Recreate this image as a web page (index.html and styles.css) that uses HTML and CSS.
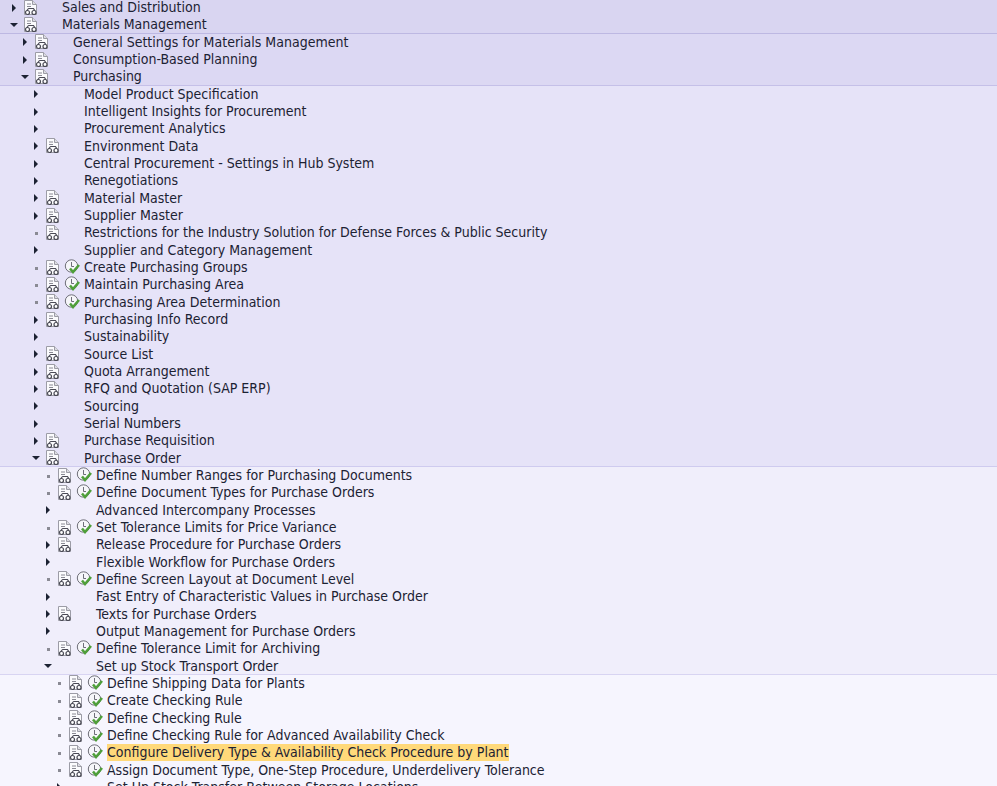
FILE: index.html
```html
<!DOCTYPE html>
<html lang="en">
<head>
    <meta charset="UTF-8">
    <meta name="viewport" content="width=device-width, initial-scale=1.0">
    <title>Customizing tree</title>
    <link rel="stylesheet" href="styles.css">
</head>
<body>

    <svg class="defs" width="0" height="0">
        <symbol id="doc" viewBox="0 0 15 16">
            <path d="M1.5 .5H9.5L13.5 4.5V14.5H1.5Z" fill="#fbfbfd" stroke="#9c9ca6"/>
            <path d="M9.5 .5V4.5H13.5" fill="#dcdce2" stroke="#9c9ca6"/>
            <path d="M4 4H8M4 6.5H8" stroke="#8a8a94"/>
            <path d="M5.5 8.5H10.5L12 11M5.5 8.5L3.5 11" fill="none" stroke="#4a4a55" stroke-width="1.2"/>
            <circle cx="4.5" cy="12.5" r="2" fill="#fff" stroke="#4a4a55" stroke-width="1.2"/>
            <circle cx="11" cy="12.5" r="2" fill="#fff" stroke="#4a4a55" stroke-width="1.2"/>
        </symbol>
        <symbol id="check" viewBox="0 0 17 16">
            <circle cx="7.5" cy="7" r="6.2" fill="#f6f6fa" stroke="#6e6e78"/>
            <path d="M7.5 3V7.5H10" fill="none" stroke="#6e6e78"/>
            <path d="M6 9.5L9 13L15 6" fill="none" stroke="#4f9f3a" stroke-width="2.6"/>
        </symbol>
    </svg>

    <div class="tree">
        <div class="level-0">
            <div class="row"><span class="toggle closed"></span><svg class="doc"><use href="#doc"/></svg><span class="gap"></span><span class="label">Sales and Distribution</span></div>
            <div class="row"><span class="toggle open"></span><svg class="doc"><use href="#doc"/></svg><span class="gap"></span><span class="label">Materials Management</span></div>
        </div>

        <div class="level-1">
            <div class="row"><span class="toggle closed"></span><svg class="doc"><use href="#doc"/></svg><span class="gap"></span><span class="label">General Settings for Materials Management</span></div>
            <div class="row"><span class="toggle closed"></span><svg class="doc"><use href="#doc"/></svg><span class="gap"></span><span class="label">Consumption-Based Planning</span></div>
            <div class="row"><span class="toggle open"></span><svg class="doc"><use href="#doc"/></svg><span class="gap"></span><span class="label">Purchasing</span></div>
        </div>

        <div class="level-2">
            <div class="row"><span class="toggle closed"></span><span class="no-doc"></span><span class="gap"></span><span class="label">Model Product Specification</span></div>
            <div class="row"><span class="toggle closed"></span><span class="no-doc"></span><span class="gap"></span><span class="label">Intelligent Insights for Procurement</span></div>
            <div class="row"><span class="toggle closed"></span><span class="no-doc"></span><span class="gap"></span><span class="label">Procurement Analytics</span></div>
            <div class="row"><span class="toggle closed"></span><svg class="doc"><use href="#doc"/></svg><span class="gap"></span><span class="label">Environment Data</span></div>
            <div class="row"><span class="toggle closed"></span><span class="no-doc"></span><span class="gap"></span><span class="label">Central Procurement - Settings in Hub System</span></div>
            <div class="row"><span class="toggle closed"></span><span class="no-doc"></span><span class="gap"></span><span class="label">Renegotiations</span></div>
            <div class="row"><span class="toggle closed"></span><svg class="doc"><use href="#doc"/></svg><span class="gap"></span><span class="label">Material Master</span></div>
            <div class="row"><span class="toggle closed"></span><svg class="doc"><use href="#doc"/></svg><span class="gap"></span><span class="label">Supplier Master</span></div>
            <div class="row"><span class="toggle leaf"></span><svg class="doc"><use href="#doc"/></svg><span class="gap"></span><span class="label">Restrictions for the Industry Solution for Defense Forces &amp; Public Security</span></div>
            <div class="row"><span class="toggle closed"></span><span class="no-doc"></span><span class="gap"></span><span class="label">Supplier and Category Management</span></div>
            <div class="row"><span class="toggle leaf"></span><svg class="doc"><use href="#doc"/></svg><span class="gap"><svg class="check"><use href="#check"/></svg></span><span class="label">Create Purchasing Groups</span></div>
            <div class="row"><span class="toggle leaf"></span><svg class="doc"><use href="#doc"/></svg><span class="gap"><svg class="check"><use href="#check"/></svg></span><span class="label">Maintain Purchasing Area</span></div>
            <div class="row"><span class="toggle leaf"></span><svg class="doc"><use href="#doc"/></svg><span class="gap"><svg class="check"><use href="#check"/></svg></span><span class="label">Purchasing Area Determination</span></div>
            <div class="row"><span class="toggle closed"></span><svg class="doc"><use href="#doc"/></svg><span class="gap"></span><span class="label">Purchasing Info Record</span></div>
            <div class="row"><span class="toggle closed"></span><span class="no-doc"></span><span class="gap"></span><span class="label">Sustainability</span></div>
            <div class="row"><span class="toggle closed"></span><svg class="doc"><use href="#doc"/></svg><span class="gap"></span><span class="label">Source List</span></div>
            <div class="row"><span class="toggle closed"></span><svg class="doc"><use href="#doc"/></svg><span class="gap"></span><span class="label">Quota Arrangement</span></div>
            <div class="row"><span class="toggle closed"></span><svg class="doc"><use href="#doc"/></svg><span class="gap"></span><span class="label">RFQ and Quotation (SAP ERP)</span></div>
            <div class="row"><span class="toggle closed"></span><span class="no-doc"></span><span class="gap"></span><span class="label">Sourcing</span></div>
            <div class="row"><span class="toggle closed"></span><span class="no-doc"></span><span class="gap"></span><span class="label">Serial Numbers</span></div>
            <div class="row"><span class="toggle closed"></span><svg class="doc"><use href="#doc"/></svg><span class="gap"></span><span class="label">Purchase Requisition</span></div>
            <div class="row"><span class="toggle open"></span><svg class="doc"><use href="#doc"/></svg><span class="gap"></span><span class="label">Purchase Order</span></div>
        </div>

        <div class="level-3">
            <div class="row"><span class="toggle leaf"></span><svg class="doc"><use href="#doc"/></svg><span class="gap"><svg class="check"><use href="#check"/></svg></span><span class="label">Define Number Ranges for Purchasing Documents</span></div>
            <div class="row"><span class="toggle leaf"></span><svg class="doc"><use href="#doc"/></svg><span class="gap"><svg class="check"><use href="#check"/></svg></span><span class="label">Define Document Types for Purchase Orders</span></div>
            <div class="row"><span class="toggle closed"></span><span class="no-doc"></span><span class="gap"></span><span class="label">Advanced Intercompany Processes</span></div>
            <div class="row"><span class="toggle leaf"></span><svg class="doc"><use href="#doc"/></svg><span class="gap"><svg class="check"><use href="#check"/></svg></span><span class="label">Set Tolerance Limits for Price Variance</span></div>
            <div class="row"><span class="toggle closed"></span><svg class="doc"><use href="#doc"/></svg><span class="gap"></span><span class="label">Release Procedure for Purchase Orders</span></div>
            <div class="row"><span class="toggle closed"></span><span class="no-doc"></span><span class="gap"></span><span class="label">Flexible Workflow for Purchase Orders</span></div>
            <div class="row"><span class="toggle leaf"></span><svg class="doc"><use href="#doc"/></svg><span class="gap"><svg class="check"><use href="#check"/></svg></span><span class="label">Define Screen Layout at Document Level</span></div>
            <div class="row"><span class="toggle closed"></span><span class="no-doc"></span><span class="gap"></span><span class="label">Fast Entry of Characteristic Values in Purchase Order</span></div>
            <div class="row"><span class="toggle closed"></span><svg class="doc"><use href="#doc"/></svg><span class="gap"></span><span class="label">Texts for Purchase Orders</span></div>
            <div class="row"><span class="toggle closed"></span><span class="no-doc"></span><span class="gap"></span><span class="label">Output Management for Purchase Orders</span></div>
            <div class="row"><span class="toggle leaf"></span><svg class="doc"><use href="#doc"/></svg><span class="gap"><svg class="check"><use href="#check"/></svg></span><span class="label">Define Tolerance Limit for Archiving</span></div>
            <div class="row"><span class="toggle open"></span><span class="no-doc"></span><span class="gap"></span><span class="label">Set up Stock Transport Order</span></div>
        </div>

        <div class="level-4">
            <div class="row"><span class="toggle leaf"></span><svg class="doc"><use href="#doc"/></svg><span class="gap"><svg class="check"><use href="#check"/></svg></span><span class="label">Define Shipping Data for Plants</span></div>
            <div class="row"><span class="toggle leaf"></span><svg class="doc"><use href="#doc"/></svg><span class="gap"><svg class="check"><use href="#check"/></svg></span><span class="label">Create Checking Rule</span></div>
            <div class="row"><span class="toggle leaf"></span><svg class="doc"><use href="#doc"/></svg><span class="gap"><svg class="check"><use href="#check"/></svg></span><span class="label">Define Checking Rule</span></div>
            <div class="row"><span class="toggle leaf"></span><svg class="doc"><use href="#doc"/></svg><span class="gap"><svg class="check"><use href="#check"/></svg></span><span class="label">Define Checking Rule for Advanced Availability Check</span></div>
            <div class="row"><span class="toggle leaf"></span><svg class="doc"><use href="#doc"/></svg><span class="gap"><svg class="check"><use href="#check"/></svg></span><span class="label selected">Configure Delivery Type &amp; Availability Check Procedure by Plant</span></div>
            <div class="row"><span class="toggle leaf"></span><svg class="doc"><use href="#doc"/></svg><span class="gap"><svg class="check"><use href="#check"/></svg></span><span class="label">Assign Document Type, One-Step Procedure, Underdelivery Tolerance</span></div>
            <div class="row"><span class="toggle closed"></span><span class="no-doc"></span><span class="gap"></span><span class="label">Set Up Stock Transfer Between Storage Locations</span></div>
        </div>
    </div>

</body>
</html>
```
FILE: styles.css
```css
html, body {
    margin: 0;
    height: 100%;
    overflow: hidden;
}

body {
    font-family: 'DejaVu Sans Condensed', 'DejaVu Sans', sans-serif;
    font-stretch: condensed;
    font-size: 14px;
    color: #1c2233;
    background-color: #f6f5fe;
}

.defs {
    position: absolute;
}

.tree {
    margin-top: -1px;
}

/* Tree levels */
.level-0 { background: #d9d5f1; box-shadow: inset 0 -1px 0 #bdb8e2; }
.level-1 { background: #dcd8f3; box-shadow: inset 0 -1px 0 #c5c0e8; }
.level-2 { background: #e6e3f8; box-shadow: inset 0 -1px 0 #cfcbef; }
.level-3 { background: #f0eefb; box-shadow: inset 0 -1px 0 #d8d4f2; }
.level-4 { background: #f6f5fe; }

.row {
    display: flex;
    align-items: center;
    height: 17.34px;
    white-space: nowrap;
}

.level-0 .row { padding-left: 10px; }
.level-1 .row { padding-left: 21px; }
.level-2 .row { padding-left: 32px; }
.level-3 .row { padding-left: 44px; }
.level-4 .row { padding-left: 55px; }

/* Toggle arrows */
.toggle {
    width: 13px;
    height: 8px;
    flex: none;
    position: relative;
}

.toggle::before {
    content: "";
    position: absolute;
}

.closed::before {
    left: 2px;
    top: 0;
    border-left: 4px solid #1c2233;
    border-top: 4px solid transparent;
    border-bottom: 4px solid transparent;
}

.open::before {
    left: 0;
    top: 2px;
    border-top: 4px solid #1c2233;
    border-left: 4px solid transparent;
    border-right: 4px solid transparent;
}

.leaf::before {
    left: 3px;
    top: 3px;
    width: 3px;
    height: 3px;
    background: #8a8a94;
}

/* Icons */
.doc, .no-doc {
    width: 15px;
    height: 16px;
    flex: none;
}

.gap {
    width: 24px;
    flex: none;
    display: flex;
    align-items: center;
    padding-left: 4px;
    box-sizing: border-box;
}

.check {
    width: 17px;
    height: 16px;
    margin-top: -1px;
}

.label {
    line-height: 17px;
}

.selected {
    background: #ffd97a;
}
```
